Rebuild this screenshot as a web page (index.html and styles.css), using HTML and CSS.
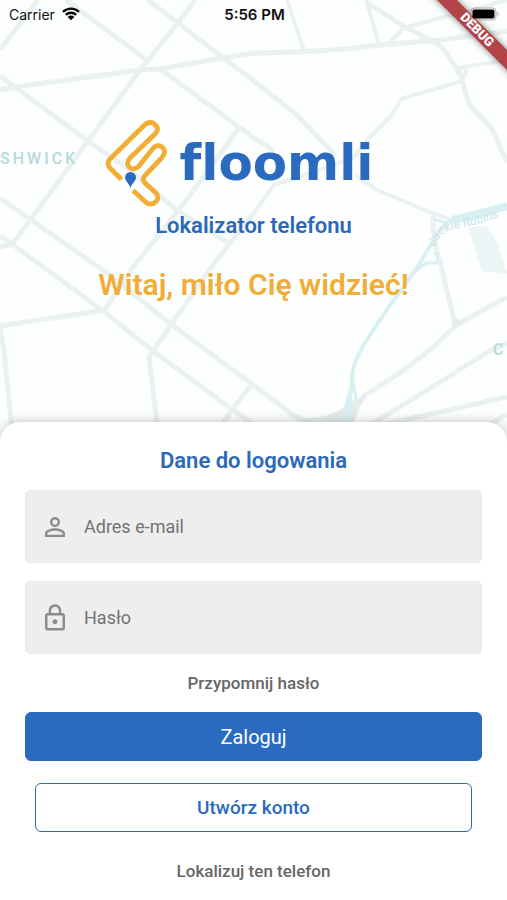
FILE: index.html
```html
<!DOCTYPE html>
<html lang="pl">
<head>
<meta charset="utf-8">
<meta name="viewport" content="width=device-width, initial-scale=1">
<title>floomli</title>
<link rel="stylesheet" href="styles.css">
</head>
<body>
<div class="screen">
  <header class="hero">
    <svg class="map" viewBox="0 0 507 444" preserveAspectRatio="xMidYMin slice" aria-hidden="true">
      <g class="road">
        <path d="M0 90L15 87L140 70L160 69L222 58L254 53L300 52L345 49L380 45L440 40L507 31"/>
        <path d="M0 50L38 0M66 0L148 61M0 76L15 87L88 141L127 168L178 211L230 244"/>
        <path d="M195 0L178 23L140 70L88 141L31 219L12 244L0 236M12 244L0 247"/>
        <path d="M148 0L178 23L222 57L254 81L297 115L335 155"/>
        <path d="M160 69L254 138L274 151M238 129L205 175L178 211L131 270L104 311"/>
        <path d="M254 213L229 244L205 276L171 325L153 351L149 357L159 440"/>
        <path d="M0 198L31 220L107 273L172 325L252 384L232 410L212 440"/>
        <path d="M12 244L103 311L153 351L233 410L270 436M0 326L104 310M0 328L4 350L12 430"/>
        <path d="M252 384L300 420M507 343L488 352L440 382L400 407L372 424"/>
        <path d="M507 397L440 412L385 424M507 414L490 424"/>
      </g>
      <g class="road road-thin">
        <path d="M254 213L274 185L320 170L354 157L369 138L392 115L401 99L462 81"/>
        <path d="M355 175L375 189L427 211L449 219"/>
        <path d="M287 0L304 50M366 0L379 44M389 43L404 28L444 17L480 8L507 0"/>
        <path d="M458 68L507 60"/>
        <circle cx="462" cy="72" r="4"/>
      </g>
      <g class="road">
        <path d="M367 3L407 28L434 42Q444 48 448 55L462 78L466 95L471 107L491 127L507 162"/>
        <path d="M433 216L434 240L441 265L453 316L455 326"/>
        <path d="M507 297L474 315L455 326L430 350L400 373L365 395L352 412"/>
        <path d="M290 414L305 421L345 418"/>
      </g>
      <path class="junction" d="M453 314Q457 322 467 319L453 330ZM300 419Q332 418 345 406L365 395L354 422L300 425Z"/>
      <path class="park" d="M468 227L486 226L496 240L507 272V274L482 271Z"/>
      <g class="parkway">
        <path d="M507 206L470 216L452 220Q440 226 432 243L418 266L405 285L388 308L370 335Q353 361 352 376L351 390L346 430"/>
        <path class="trunk" d="M507 206L470 216L452 220"/>
        <path class="ramp" d="M434 219L450 224M434 252Q440 257 436 263H426L414 272M352 376L356 398L344 424M350 390L346 406L352 420"/>
      </g>
      <path id="parkway-label" d="M434 247Q441 231 455 229Q485 224 520 208" fill="none"/>
      <text class="road-name"><textPath href="#parkway-label">Jackie Robins</textPath></text>
      <text class="district" x="0" y="164">SHWICK</text>
      <text class="district" x="493" y="355">C</text>
    </svg>

    <div class="status">
      <div class="carrier">
        <span>Carrier</span>
        <svg width="18" height="14" viewBox="0 0 18 14" aria-hidden="true">
          <path d="M1 4.9A11.4 11.4 0 0 1 17 4.9M3.8 7.9A7.4 7.4 0 0 1 14.2 7.9" fill="none" stroke="#050505" stroke-width="2.3"/>
          <path d="M9 13.2L5.7 9.9A4.7 4.7 0 0 1 12.3 9.9Z" fill="#050505"/>
        </svg>
      </div>
      <time>5:56 PM</time>
      <svg class="battery" width="30" height="14" viewBox="0 0 30 14" aria-hidden="true">
        <rect x="1" y="1" width="25" height="12" rx="3.5" fill="none" stroke="#aaa5a6"/>
        <rect x="2.5" y="2.5" width="22" height="9" rx="2" fill="#000"/>
        <path d="M27.5 5Q30 7 27.5 9Z" fill="#aaa5a6"/>
      </svg>
    </div>
    <div class="debug"><span>DEBUG</span></div>

    <div class="brand">
      <svg width="62" height="88" viewBox="0 0 62 88" aria-hidden="true">
        <path d="M16.500 60.500L5.500 49.500Q1 45 5 40L38.500 7C43 2 48 3 50.500 6C53.500 9 52.500 12.500 49.500 15.500L25.500 38.500C21 43 22.500 46.500 24.500 48.500C27 50.500 30.500 50.500 33.500 47.500L47.500 30C51 25.500 55.500 26 58 29C60.500 32 59.500 35.500 57 38.500L40.500 56C37.500 59 37.500 61.500 40.500 64.500L50.500 73.500C54 77 53.500 80.500 50.500 83C47.500 86 43.500 86 40 82.500L28 71.500" fill="none" stroke="#f2ad32" stroke-width="4.800" stroke-linejoin="round"/>
        <path d="M25.500 69C24 64 20 62 20 58.500A5.500 5.500 0 0 1 31 58.500C31 62 27 64 25.500 69Z" fill="#2a6abf"/>
      </svg>
      <span class="wordmark">floomli</span>
    </div>
    <p class="tagline">Lokalizator telefonu</p>
    <h1 class="welcome">Witaj, miło Cię widzieć!</h1>
  </header>

  <main class="card">
    <form class="login">
      <h2 class="title">Dane do logowania</h2>
      <label class="field">
        <svg width="30" height="30" viewBox="0 0 24 24" aria-label="Adres e-mail">
          <path d="M12 5.900a2.100 2.100 0 1 1 0 4.200 2.100 2.100 0 0 1 0-4.200m0 9c2.970 0 6.100 1.460 6.100 2.100v1.100H5.900V17c0-.64 3.130-2.100 6.100-2.100M12 4C9.790 4 8 5.790 8 8s1.790 4 4 4 4-1.790 4-4-1.790-4-4-4zm0 9c-2.670 0-8 1.340-8 4v3h16v-3c0-2.660-5.330-4-8-4z"/>
        </svg>
        <input type="email" placeholder="Adres e-mail">
      </label>
      <label class="field">
        <svg width="30" height="30" viewBox="0 0 24 24" aria-label="Hasło">
          <path d="M12 17c1.100 0 2-.9 2-2s-.9-2-2-2-2 .9-2 2 .9 2 2 2zm6-9h-1V6c0-2.760-2.240-5-5-5S7 3.240 7 6v2H6c-1.100 0-2 .9-2 2v10c0 1.100.9 2 2 2h12c1.100 0 2-.9 2-2V10c0-1.100-.9-2-2-2zM8.900 6c0-1.710 1.390-3.100 3.100-3.100s3.100 1.390 3.100 3.100v2H8.900V6zM18 20H6V10h12v10z"/>
        </svg>
        <input type="password" placeholder="Hasło">
      </label>
      <a class="link" href="#">Przypomnij hasło</a>
      <button class="button primary" type="submit">Zaloguj</button>
      <button class="button outline" type="button">Utwórz konto</button>
      <a class="link" href="#">Lokalizuj ten telefon</a>
    </form>
  </main>
</div>
</body>
</html>
```
FILE: styles.css
```css
* { box-sizing: border-box; }

body {
  margin: 0;
  background: #fff;
  font-family: Roboto, "Noto Sans", sans-serif;
  color: #2a68b8;
}

.screen {
  min-height: 100vh;
  display: flex;
  flex-direction: column;
}

.hero {
  position: relative;
  overflow: hidden;
  display: flex;
  flex-direction: column;
  align-items: center;
  padding-bottom: 140px;
  background: #fdfefe;
}

.map {
  position: absolute;
  inset: 0;
  width: 100%;
  height: 100%;
}

.road { fill: none; stroke: #ebf0f0; stroke-width: 5; stroke-linejoin: round; }
.road-thin { stroke-width: 4; }
.junction { fill: #e6ecec; }
.park { fill: #ebf5f5; }
.parkway { fill: none; stroke: #d8f0f2; stroke-width: 4; }
.trunk { stroke-width: 8; }
.ramp { stroke-width: 3; }
.road-name { font-size: 12px; fill: #c8e4e7; }
.district { font-size: 16px; font-weight: 500; letter-spacing: 3px; fill: #b4dadb; }

.status {
  position: relative;
  z-index: 2;
  align-self: stretch;
  display: grid;
  grid-template-columns: 1fr auto 1fr;
  align-items: center;
  height: 28px;
  padding: 0 7px 0 9px;
  font-family: Inter, "Liberation Sans", sans-serif;
  font-size: 14px;
  color: #111;
}

.carrier { display: flex; align-items: center; gap: 7px; }
.status time { font-size: 15px; font-weight: 600; }
.battery { justify-self: end; }

.debug {
  position: absolute;
  z-index: 1;
  top: 0;
  right: 0;
  width: 90px;
  height: 90px;
  overflow: hidden;
}

.debug span {
  position: absolute;
  top: 23px;
  right: -40px;
  width: 140px;
  transform: rotate(45deg);
  background: #b24347;
  box-shadow: 0 0 7px rgba(0, 0, 0, 0.5);
  color: #fff;
  font-size: 13px;
  font-weight: 900;
  line-height: 14px;
  text-align: center;
}

.brand {
  position: relative;
  display: flex;
  align-items: center;
  gap: 13px;
  margin-top: 91px;
  padding-right: 29px;
}

.wordmark {
  font-family: "DejaVu Sans", "Open Sans", sans-serif;
  font-size: 50px;
  font-weight: 700;
  font-variant-ligatures: none;
  line-height: 84px;
  color: #2a6abf;
}

.tagline, .welcome, .title { margin: 0; text-align: center; }
.tagline, .title { font-size: 22px; line-height: 28px; font-weight: 600; }
.tagline { position: relative; margin-top: 5px; }
.welcome {
  position: relative;
  margin-top: 26px;
  font-size: 30px;
  line-height: 38px;
  font-weight: 600;
  color: #f0ad37;
}

.card {
  position: relative;
  flex: 1;
  margin-top: -22px;
  padding: 25px 25px 16px;
  border-radius: 20px 20px 0 0;
  background: #fff;
  box-shadow: 0 0 12px rgba(0, 0, 0, 0.25);
}

.login {
  display: flex;
  flex-direction: column;
  align-items: center;
}

.field {
  align-self: stretch;
  display: flex;
  align-items: center;
  gap: 14px;
  height: 73px;
  margin-top: 18px;
  padding: 0 14px;
  border: 1px solid #e8e8e8;
  border-radius: 5px;
  background: #eee;
}

.title + .field { margin-top: 15px; }
.field svg { flex: none; fill: #8c8c8c; }

.field input {
  flex: 1;
  min-width: 0;
  padding: 0;
  border: 0;
  outline: 0;
  background: transparent;
  font: 18px/24px Roboto, "Noto Sans", sans-serif;
  color: #333;
}

.field input::placeholder { color: #727272; opacity: 1; }

.link {
  margin-top: 18px;
  font-size: 17px;
  line-height: 22px;
  font-weight: 500;
  color: #666;
  text-decoration: none;
}

.button {
  height: 49px;
  border: 1px solid #2a6abf;
  border-radius: 6px;
  font: 400 20px/24px Roboto, "Noto Sans", sans-serif;
}

.primary {
  align-self: stretch;
  margin-top: 18px;
  background: #2a6abf;
  color: #fff;
}

.outline {
  align-self: stretch;
  margin: 22px 10px 10px;
  background: #fff;
  color: #2a6abf;
  font-size: 19px;
  font-weight: 500;
}
```
